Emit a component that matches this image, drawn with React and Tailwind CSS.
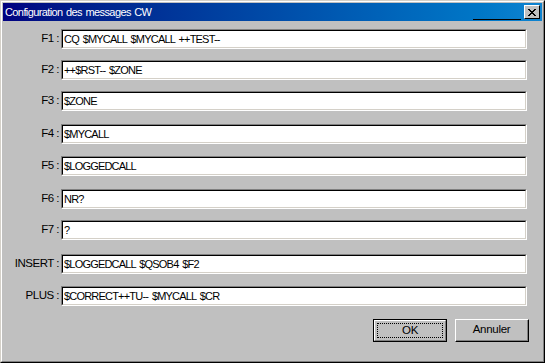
import React from "react";

const rows = [
  { label: "F1 :", value: "CQ $MYCALL $MYCALL ++TEST--", mt: "mt-[8px]" },
  { label: "F2 :", value: "++$RST-- $ZONE", mt: "mt-[11px]" },
  { label: "F3 :", value: "$ZONE", mt: "mt-[11px]" },
  { label: "F4 :", value: "$MYCALL", mt: "mt-[13px]" },
  { label: "F5 :", value: "$LOGGEDCALL", mt: "mt-[12px]" },
  { label: "F6 :", value: "NR?", mt: "mt-[13px]" },
  { label: "F7 :", value: "?", mt: "mt-[11px]" },
  { label: "INSERT :", value: "$LOGGEDCALL $QSOB4 $F2", mt: "mt-[14px]" },
  { label: "PLUS :", value: "$CORRECT++TU-- $MYCALL $CR", mt: "mt-[12px]" },
];

function Field({ value }) {
  return (
    <div className="w-[466px] h-[20px] border-t border-l border-t-[#808080] border-l-[#808080] border-b border-r border-b-white border-r-white">
      <div className="w-full h-full bg-white border-t border-l border-t-black border-l-black border-b border-r border-b-[#d4d0c8] border-r-[#d4d0c8] flex items-center pl-[1px] text-[11px] tracking-[-0.8px] [word-spacing:1.5px] leading-none text-black">
        {value}
      </div>
    </div>
  );
}

export default function App() {
  return (
    <div
      className="w-[545px] h-[363px] bg-[#c0c0c0] border-t border-l border-t-[#d4d0c8] border-l-[#d4d0c8] border-b border-r border-b-black border-r-black"
      style={{ fontFamily: '"Liberation Sans", Arial, sans-serif' }}
    >
      <div className="w-full h-full border-t border-l border-t-white border-l-white border-b border-r border-b-[#808080] border-r-[#808080] p-[1px] flex flex-col">
        {/* Title bar */}
        <div className="relative h-[18px] bg-gradient-to-r from-[#000080] to-[#1084d0] flex items-center pl-[2px] shrink-0">
          <span className="text-white text-[11px] tracking-[-0.6px] [word-spacing:1px] leading-none">Configuration des messages CW</span>
          <div className="absolute right-[2px] top-[2px] w-[16px] h-[14px] bg-[#c0c0c0] border-t border-l border-t-white border-l-white border-b border-r border-b-black border-r-black flex items-center justify-center">
            <svg width="8" height="7" viewBox="0 0 8 7" shapeRendering="crispEdges">
              <path d="M0 0h2v1H0zM6 0h2v1H6zM1 1h2v1H1zM5 1h2v1H5zM2 2h4v1H2zM3 3h2v1H3zM2 4h4v1H2zM1 5h2v1H1zM5 5h2v1H5zM0 6h2v1H0zM6 6h2v1H6z" fill="#000" />
            </svg>
          </div>
          <div className="absolute left-[470px] top-[16px] w-[48px] h-[1px] bg-black" />
        </div>

        {/* Rows */}
        <div className="flex flex-col">
          {rows.map((r) => (
            <div key={r.label} className={`flex items-center ${r.mt}`}>
              <div className="w-[57px] text-right text-[11.5px] tracking-[-0.5px] leading-none text-black pr-[1px]">{r.label}</div>
              <div className="ml-[1px]">
                <Field value={r.value} />
              </div>
            </div>
          ))}
        </div>

        {/* Buttons */}
        <div className="flex justify-end gap-[8px] pr-[13px] mt-[13px]">
          <div className="w-[74px] h-[23px] border border-black">
            <div className="w-full h-full border-t border-l border-t-white border-l-white border-b border-r border-b-[#808080] border-r-[#808080] flex items-center justify-center p-[2px]">
              <div className="w-full h-full border border-dotted border-black flex items-center justify-center text-[11.5px] tracking-[-0.3px] leading-none text-black">
                OK
              </div>
            </div>
          </div>
          <div className="w-[74px] h-[23px] border-t border-l border-t-white border-l-white border-b border-r border-b-black border-r-black">
            <div className="w-full h-full border-b border-r border-b-[#808080] border-r-[#808080] flex items-center justify-center text-[11.5px] tracking-[-0.3px] leading-none text-black">
              Annuler
            </div>
          </div>
        </div>
      </div>
    </div>
  );
}
